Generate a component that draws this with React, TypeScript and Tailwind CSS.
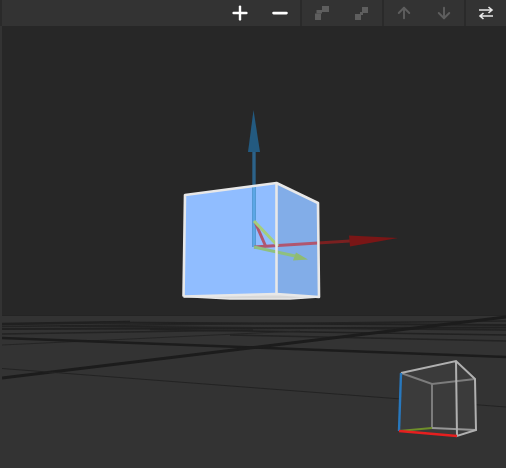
import React from 'react';
import { ArrowDown, ArrowUp, Minus, Plus } from 'lucide-react';

// one toolbar cell, 40px wide like the buttons in the screenshot
const ToolButton = ({ children }: { children: React.ReactNode }) => (
  <button className="w-10 h-full flex items-center justify-center">{children}</button>
);

const floorLines = [
  { x1: 2, y1: 315.5, x2: 506, y2: 315.5, w: 1.2, c: '#242424' },
  { x1: 2, y1: 324, x2: 130, y2: 322, w: 2.4, c: '#202020' },
  { x1: 100, y1: 322.5, x2: 506, y2: 325, w: 2, c: '#212121' },
  { x1: 2, y1: 326.5, x2: 506, y2: 321, w: 1.6, c: '#232323' },
  { x1: 2, y1: 329, x2: 506, y2: 327.5, w: 1.8, c: '#212121' },
  { x1: 60, y1: 326, x2: 506, y2: 330, w: 1.6, c: '#222222' },
  { x1: 2, y1: 334, x2: 253, y2: 330, w: 1.4, c: '#232323' },
  { x1: 150, y1: 329.5, x2: 506, y2: 335, w: 1.6, c: '#212121' },
  { x1: 2, y1: 345, x2: 300, y2: 331, w: 1.2, c: '#252525' },
  { x1: 230, y1: 335, x2: 506, y2: 341, w: 1.4, c: '#232323' },
  { x1: 2, y1: 338, x2: 506, y2: 357, w: 2.6, c: '#1c1c1c' },
  { x1: 2, y1: 378, x2: 506, y2: 317, w: 2.8, c: '#1c1c1c' },
  { x1: 2, y1: 368.5, x2: 506, y2: 407, w: 1, c: '#232323' },
];

const Scene = () => (
  <svg viewBox="2 26 504 442" className="w-[504px] h-[442px] block">
    {/* floor */}
    <rect x="2" y="316" width="504" height="152" fill="#333333" />
    {floorLines.map((l, i) => (
      <line key={i} x1={l.x1} y1={l.y1} x2={l.x2} y2={l.y2} stroke={l.c} strokeWidth={l.w} />
    ))}

    {/* big cube */}
    <polygon points="183.5,296.5 230,299 290,299 319,297 276.5,294" fill="#d8d8d8" />
    <polygon points="185,195 276.5,183 276.5,294 183.5,296.5" fill="#90bdff" />
    <polygon points="276.5,183 318,203 319,297 276.5,294" fill="#82ade8" />

    {/* axes */}
    <line x1="254" y1="247" x2="254" y2="152" stroke="#2c6289" strokeWidth="3.4" />
    <line x1="254" y1="247" x2="254" y2="186" stroke="#5ba6e6" strokeWidth="3.4" />
    <polygon points="253.5,110 260,152 248,152" fill="#235a80" />
    <line x1="254" y1="247" x2="318" y2="243" stroke="#b0566f" strokeWidth="3" />
    <line x1="318" y1="243" x2="350" y2="241" stroke="#7a2020" strokeWidth="3" />
    <polygon points="398,238 349,235.5 350,246.5" fill="#7a1616" />
    <line x1="255" y1="222" x2="266" y2="247" stroke="#b0566f" strokeWidth="3" />
    <line x1="254" y1="221" x2="278" y2="246" stroke="#a5cf7a" strokeWidth="3" />
    <line x1="254" y1="247" x2="295" y2="256" stroke="#8fc07f" strokeWidth="3" />
    <polygon points="296,252.5 308,259.5 293,260.5" fill="#8fbb72" />

    {/* cube edges */}
    <g fill="none" stroke="#e8e8e8" strokeWidth="2.6" strokeLinejoin="round">
      <polyline points="183.5,296.5 185,195 276.5,183 318,203 319,297 276.5,294 183.5,296.5" />
      <line x1="276.5" y1="183" x2="276.5" y2="294" />
      <polyline points="183.5,296.5 230,299 290,299 319,297" strokeWidth="1.6" />
    </g>

    {/* orientation gizmo */}
    <polygon points="401,373 456,361 475,379 476,430 457,436 399,431" fill="#3b3b3b" />
    <g fill="none" strokeWidth="2">
      <polyline points="401,373 432,384 475,379" stroke="#7c7c7c" />
      <line x1="432" y1="384" x2="432" y2="428" stroke="#7c7c7c" />
      <line x1="432" y1="428" x2="476" y2="430" stroke="#969696" />
      <polyline points="401,373 456,361 475,379 476,430 457,436 456,361" stroke="#b0b0b0" />
    </g>
    <line x1="399" y1="431" x2="432" y2="428" stroke="#6f8f2a" strokeWidth="2" />
    <line x1="401" y1="373" x2="399" y2="431" stroke="#2878bd" strokeWidth="2.4" />
    <line x1="399" y1="431" x2="457" y2="436" stroke="#e51f1f" strokeWidth="2.4" />
  </svg>
);

const App = () => {
  return (
    <div className="w-[506px] h-[468px] flex flex-col overflow-hidden bg-[#272727]">
      <div className="h-[26px] shrink-0 flex justify-end gap-[2px] bg-[#2a2a2a] pl-[2px]">
        <div className="flex flex-1 justify-end h-full bg-[#333333]">
          <ToolButton><Plus size={22} strokeWidth={2.6} className="text-white" /></ToolButton>
          <ToolButton><Minus size={22} strokeWidth={3} className="text-white" /></ToolButton>
        </div>
        <div className="flex h-full bg-[#333333]">
          <ToolButton>
            <svg width="14" height="14" viewBox="0 0 14 14" fill="#5e5e5e">
              <rect x="0" y="7.5" width="6" height="6.5" />
              <rect x="1.5" y="4" width="5.5" height="3.5" />
              <rect x="7" y="0" width="7" height="6" />
            </svg>
          </ToolButton>
          <ToolButton>
            <svg width="14" height="14" viewBox="0 0 14 14" fill="#5e5e5e">
              <rect x="0" y="8" width="6" height="6" />
              <rect x="7" y="1" width="6" height="6" />
              <rect x="5" y="6" width="3" height="3" />
            </svg>
          </ToolButton>
        </div>
        <div className="flex h-full bg-[#333333]">
          <ToolButton><ArrowUp size={18} strokeWidth={2.6} className="text-[#5e5e5e]" /></ToolButton>
          <ToolButton><ArrowDown size={18} strokeWidth={2.6} className="text-[#5e5e5e]" /></ToolButton>
        </div>
        <div className="flex h-full bg-[#333333]">
          <ToolButton>
            <svg width="16" height="14" viewBox="0 0 16 14" fill="none" stroke="#e8e8e8" strokeWidth="1.6">
              <path d="M1 4h13M10.5 1l3.5 3-3.5 3" />
              <path d="M15 10H2M5.5 7l-3.5 3 3.5 3" />
            </svg>
          </ToolButton>
        </div>
      </div>
      <div className="flex-1 min-h-0 flex">
        <div className="w-[2px] bg-[#333333]" />
        <Scene />
      </div>
    </div>
  );
};

export default App;
